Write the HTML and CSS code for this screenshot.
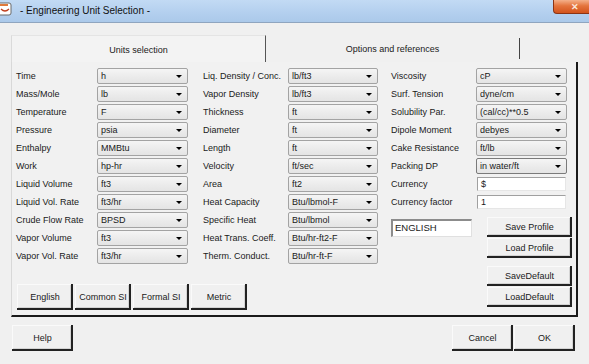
FILE: index.html
```html
<!DOCTYPE html>
<html>
<head>
<meta charset="utf-8">
<title>Engineering Unit Selection</title>
<link rel="stylesheet" href="styles.css">
</head>
<body>
<div class="window">
  <div class="titlebar">
    <svg class="appicon" width="13" height="16" viewBox="0 0 13 16">
      <rect x="-3" y="3" width="14" height="12" rx="2" fill="#fff" stroke="#6a6a6a" stroke-width="1"/>
      <rect x="-1" y="4" width="9" height="2" fill="#e07a3c"/>
      <path d="M1 9 Q5 13 9 9" fill="none" stroke="#c04020" stroke-width="1.2"/>
    </svg>
    <span class="title">- Engineering Unit Selection -</span>
    <div class="close"><span>✕</span></div>
  </div>
  <div class="client">
    <div class="tabs">
      <div class="tab active">Units selection</div>
      <div class="tab">Options and references</div>
    </div>
    <div class="panel">
      <div class="leftpart">
        <div class="cols">
          <div class="col c1">
            <div class="row"><span class="lbl">Time</span><div class="dd"><span>h</span><i></i></div></div>
            <div class="row"><span class="lbl">Mass/Mole</span><div class="dd"><span>lb</span><i></i></div></div>
            <div class="row"><span class="lbl">Temperature</span><div class="dd"><span>F</span><i></i></div></div>
            <div class="row"><span class="lbl">Pressure</span><div class="dd"><span>psia</span><i></i></div></div>
            <div class="row"><span class="lbl">Enthalpy</span><div class="dd"><span>MMBtu</span><i></i></div></div>
            <div class="row"><span class="lbl">Work</span><div class="dd"><span>hp-hr</span><i></i></div></div>
            <div class="row"><span class="lbl">Liquid Volume</span><div class="dd"><span>ft3</span><i></i></div></div>
            <div class="row"><span class="lbl">Liquid Vol. Rate</span><div class="dd"><span>ft3/hr</span><i></i></div></div>
            <div class="row"><span class="lbl">Crude Flow Rate</span><div class="dd"><span>BPSD</span><i></i></div></div>
            <div class="row"><span class="lbl">Vapor Volume</span><div class="dd"><span>ft3</span><i></i></div></div>
            <div class="row"><span class="lbl">Vapor Vol. Rate</span><div class="dd"><span>ft3/hr</span><i></i></div></div>
          </div>
          <div class="col c2">
            <div class="row"><span class="lbl">Liq. Density / Conc.</span><div class="dd"><span>lb/ft3</span><i></i></div></div>
            <div class="row"><span class="lbl">Vapor Density</span><div class="dd"><span>lb/ft3</span><i></i></div></div>
            <div class="row"><span class="lbl">Thickness</span><div class="dd"><span>ft</span><i></i></div></div>
            <div class="row"><span class="lbl">Diameter</span><div class="dd"><span>ft</span><i></i></div></div>
            <div class="row"><span class="lbl">Length</span><div class="dd"><span>ft</span><i></i></div></div>
            <div class="row"><span class="lbl">Velocity</span><div class="dd"><span>ft/sec</span><i></i></div></div>
            <div class="row"><span class="lbl">Area</span><div class="dd"><span>ft2</span><i></i></div></div>
            <div class="row"><span class="lbl">Heat Capacity</span><div class="dd"><span>Btu/lbmol-F</span><i></i></div></div>
            <div class="row"><span class="lbl">Specific Heat</span><div class="dd"><span>Btu/lbmol</span><i></i></div></div>
            <div class="row"><span class="lbl">Heat Trans. Coeff.</span><div class="dd"><span>Btu/hr-ft2-F</span><i></i></div></div>
            <div class="row"><span class="lbl">Therm. Conduct.</span><div class="dd"><span>Btu/hr-ft-F</span><i></i></div></div>
          </div>
        </div>
        <div class="presets">
          <div class="btn preset">English</div>
          <div class="btn preset">Common SI</div>
          <div class="btn preset">Formal SI</div>
          <div class="btn preset">Metric</div>
        </div>
      </div>
      <div class="col c3">
        <div class="row"><span class="lbl">Viscosity</span><div class="dd"><span>cP</span><i></i></div></div>
        <div class="row"><span class="lbl">Surf. Tension</span><div class="dd"><span>dyne/cm</span><i></i></div></div>
        <div class="row"><span class="lbl">Solubility Par.</span><div class="dd"><span>(cal/cc)**0.5</span><i></i></div></div>
        <div class="row"><span class="lbl">Dipole Moment</span><div class="dd"><span>debyes</span><i></i></div></div>
        <div class="row"><span class="lbl">Cake Resistance</span><div class="dd"><span>ft/lb</span><i></i></div></div>
        <div class="row"><span class="lbl">Packing DP</span><div class="dd focus"><span>in water/ft</span><i></i></div></div>
        <div class="row"><span class="lbl">Currency</span><div class="txt">$</div></div>
        <div class="row"><span class="lbl">Currency factor</span><div class="txt">1</div></div>
        <div class="profile">
          <div class="profname">ENGLISH</div>
          <div class="profbtns">
            <div class="btn pb">Save Profile</div>
            <div class="btn pb">Load Profile</div>
            <div class="btn pb gapb">SaveDefault</div>
            <div class="btn pb">LoadDefault</div>
          </div>
        </div>
      </div>
    </div>
    <div class="footer">
      <div class="btn fb">Help</div>
      <div class="spacer"></div>
      <div class="btn fb">Cancel</div>
      <div class="btn fb">OK</div>
    </div>
  </div>
</div>
</body>
</html>
```
FILE: styles.css
```css
* { box-sizing: border-box; }
html, body { margin: 0; padding: 0; }
body {
  width: 589px;
  height: 364px;
  overflow: hidden;
  background: #f0f0f0;
  font-family: "Liberation Sans", Arial, sans-serif;
  font-size: 9px;
  color: #1a1a1a;
}
.window { width: 589px; height: 364px; background: #f0f0f0; }

.titlebar {
  height: 23px;
  display: flex;
  align-items: flex-start;
  background: linear-gradient(to bottom, #c2daf4 0%, #b3cfee 60%, #abc9ea 100%);
  border-bottom: 1px solid #8fa5bf;
}
.appicon { flex: none; margin-top: 0; }
.title {
  margin-left: 7px;
  margin-top: 5px;
  font-size: 10px;
  color: #111;
  line-height: 12px;
}
.close {
  margin-left: auto;
  width: 36px;
  height: 14px;
  border: 1px solid #8c3414;
  border-top: none;
  border-right: none;
  border-bottom-left-radius: 4px;
  background: linear-gradient(to bottom, #f4b08a 0%, #e4743d 45%, #d2531c 100%);
  display: flex;
  align-items: center;
  justify-content: flex-start;
  padding-left: 17px;
  color: #fbe6da;
  font-size: 9px;
  font-weight: bold;
}

.client { padding: 12px 14px 0 11px; }

.tabs { display: flex; height: 27px; }
.tab {
  display: flex;
  align-items: center;
  justify-content: center;
  font-size: 9px;
  color: #1a1a1a;
}
.tab.active {
  width: 255px;
  border-left: 1px solid #dadada;
  border-top: 1px solid #e4e4e4;
  border-right: 1px solid #555;
  background: #f3f3f3;
  padding-top: 1px;
}
.tab:not(.active) {
  width: 254px;
  height: 21px;
  margin-top: 3px;
  border-right: 1px solid #444;
}

.panel {
  width: 567px;
  height: 255px;
  display: flex;
  border-left: 1px solid #d8d8d8;
  border-right: 2px solid #1a1a1a;
  border-bottom: 2px solid #1a1a1a;
  padding: 6px 4px 0 4px;
  background: #f1f1f1;
}
.leftpart { width: 362px; display: flex; flex-direction: column; }
.cols { display: flex; gap: 15px; }
.col { display: flex; flex-direction: column; gap: 2px; }
.row { display: flex; align-items: center; height: 16px; }
.lbl { flex: none; white-space: nowrap; }
.c1 .lbl { width: 81px; }
.c1 .dd { width: 91px; }
.c2 .lbl { width: 85px; }
.c2 .dd { width: 90px; }
.c3 { width: 181px; margin-left: 13px; }
.c3 .lbl { width: 85px; }
.c3 .dd { width: 91px; }

.dd {
  height: 16px;
  display: flex;
  align-items: center;
  border: 1px solid #a3a3a3;
  border-radius: 2px;
  background: linear-gradient(to bottom, #f5f5f5 0%, #ececec 50%, #e4e4e4 100%);
  padding-left: 3px;
  padding-right: 5px;
  color: #1a1a1a;
}
.dd.focus { border-color: #7a7a7a; }
.dd span { flex: 1; white-space: nowrap; overflow: hidden; }
.dd i {
  flex: none;
  width: 0;
  height: 0;
  border-left: 3px solid transparent;
  border-right: 3px solid transparent;
  border-top: 3px solid #000;
  margin-top: 1px;
}
.txt {
  width: 89px;
  height: 14px;
  margin-left: 1px;
  background: #fff;
  border-top: 1px solid #a0a0a0;
  border-left: 1px solid #a0a0a0;
  border-right: 1px solid #e6e6e6;
  border-bottom: 1px solid #e6e6e6;
  padding-left: 3px;
  line-height: 12px;
}

.profile { display: flex; margin-top: 5px; }
.profname {
  width: 81px;
  height: 18px;
  margin-top: 2px;
  background: #fff;
  border-top: 2px solid #8c8c8c;
  border-left: 2px solid #8c8c8c;
  border-right: 1px solid #e0e0e0;
  border-bottom: 1px solid #e0e0e0;
  padding-left: 2px;
  line-height: 14px;
  font-size: 9.5px;
}
.profbtns { margin-left: auto; display: flex; flex-direction: column; gap: 1px; }
.pb { width: 85px; height: 20px; }
.gapb { margin-top: 7px; }

.btn {
  display: flex;
  align-items: center;
  justify-content: center;
  background: #f0f0f0;
  box-shadow: inset -2px -2px 0 #222222, inset 1px 1px 0 #fafafa, inset -3px -3px 0 #d4d4d4;
  color: #1a1a1a;
  white-space: nowrap;
}
.presets { display: flex; gap: 2px; margin-top: 20px; margin-left: 1px; }
.preset { width: 56px; height: 26px; }

.footer { display: flex; margin-top: 8px; gap: 1px; padding-left: 1px; }
.spacer { flex: 1; }
.fb { width: 61px; height: 26px; }
```
